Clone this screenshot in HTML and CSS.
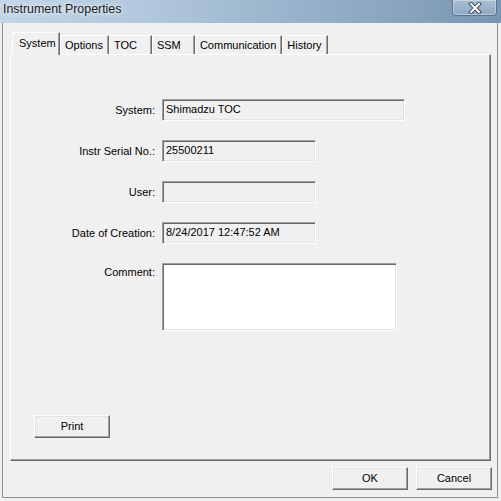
FILE: index.html
```html
<!DOCTYPE html>
<html>
<head>
  <title>Instrument Properties</title>
  <meta name="viewport" content="width=device-width, initial-scale=1.0">
  <link rel="stylesheet" href="styles.css">
</head>
<body>
  <div class="window">
    <div class="titlebar">
      <span class="title">Instrument Properties</span>
      <div class="close">
        <svg width="14" height="12" viewBox="0 0 14 12">
          <path d="M3 2 L11 10 M11 2 L3 10" stroke="#3b4b5c" stroke-width="4" stroke-linecap="square"/>
          <path d="M3 2 L11 10 M11 2 L3 10" stroke="#ffffff" stroke-width="2" stroke-linecap="square"/>
        </svg>
      </div>
    </div>
    <div class="client">
      <div class="tabs">
        <div class="tab selected">System</div>
        <div class="tab">Options</div>
        <div class="tab">TOC</div>
        <div class="tab">SSM</div>
        <div class="tab">Communication</div>
        <div class="tab">History</div>
      </div>
      <div class="panel">
        <div class="form">
          <label class="lbl">System:</label>
          <div class="field wide">Shimadzu TOC</div>

          <label class="lbl">Instr Serial No.:</label>
          <div class="field">25500211</div>

          <label class="lbl">User:</label>
          <div class="field"></div>

          <label class="lbl">Date of Creation:</label>
          <div class="field">8/24/2017 12:47:52 AM</div>

          <label class="lbl top">Comment:</label>
          <div class="field memo"></div>
        </div>
        <div class="panel-foot">
          <button class="btn">Print</button>
        </div>
      </div>
      <div class="actions">
        <button class="btn">OK</button>
        <button class="btn">Cancel</button>
      </div>
    </div>
  </div>
</body>
</html>
```

FILE: styles.css
```css
html, body {
  margin: 0;
  padding: 0;
  background-color: #f0f0f0;
}
body {
  font-family: "Liberation Sans", Arial, sans-serif;
  font-size: 11px;
  color: #000;
}
.window {
  width: 501px;
  height: 501px;
  display: flex;
  flex-direction: column;
  overflow: hidden;
}

/* title bar */
.titlebar {
  height: 23px;
  flex: none;
  display: flex;
  align-items: flex-start;
  justify-content: space-between;
  background: linear-gradient(to right, #c3d5e6 0%, #b1c7dc 30%, #93aec8 65%, #7895b1 100%);
}
.title {
  font-size: 12.4px;
  color: #1b1b1b;
  padding: 2px 0 0 3px;
  text-shadow: 0 0 6px #e8f0f8, 0 0 3px #e8f0f8;
}
.close {
  width: 43px;
  height: 15px;
  margin-right: 4px;
  border: 1px solid #5d7389;
  border-top: none;
  border-radius: 0 0 4px 4px;
  background: linear-gradient(to bottom, #a9bfd4, #8ea8c2);
  box-shadow: inset 0 0 0 1px rgba(255, 255, 255, 0.35);
  display: flex;
  align-items: center;
  justify-content: center;
}

/* client area */
.client {
  flex: 1;
  display: flex;
  flex-direction: column;
  margin: 0 3px 3px 2px;
  border: 1px solid #8d8d8d;
  border-top: none;
  padding: 9px 6px 7px 7px;
}

/* tab strip */
.tabs {
  display: flex;
  align-items: flex-end;
  height: 22px;
  padding-left: 2px;
}
.tab {
  height: 19px;
  line-height: 19px;
  min-width: 43px;
  padding: 0 5px 0 4px;
  border-top: 1px solid #fff;
  border-left: 1px solid #fff;
  border-right: 1px solid #696969;
  box-shadow: inset -1px 0 0 #a0a0a0;
  box-sizing: border-box;
}
.tab.selected {
  position: relative;
  z-index: 1;
  height: 23px;
  line-height: 21px;
  width: 48px;
  padding: 0 0 0 6px;
  margin-bottom: -1px;
  background-color: #f0f0f0;
}

/* tab page */
.panel {
  flex: 1;
  display: flex;
  flex-direction: column;
  border-top: 1px solid #fff;
  border-left: 1px solid #fff;
  border-right: 1px solid #696969;
  border-bottom: 1px solid #696969;
  box-shadow: inset -1px -1px 0 #a0a0a0;
}
.form {
  display: grid;
  grid-template-columns: 144px auto;
  column-gap: 7px;
  row-gap: 19px;
  align-items: center;
  justify-items: start;
  padding-top: 44px;
}
.lbl {
  justify-self: end;
  padding-bottom: 1px;
}
.lbl.top {
  align-self: start;
  padding-top: 3px;
}
.field {
  box-sizing: border-box;
  width: 154px;
  height: 22px;
  line-height: 18px;
  padding: 0 3px;
  border-top: 1px solid #a0a0a0;
  border-left: 1px solid #a0a0a0;
  border-right: 1px solid #fff;
  border-bottom: 1px solid #fff;
  box-shadow: inset 1px 1px 0 #696969, inset -1px -1px 0 #e3e3e3;
  white-space: nowrap;
}
.field.wide {
  width: 243px;
}
.field.memo {
  width: 235px;
  height: 68px;
  background-color: #fff;
}
.panel-foot {
  margin-top: auto;
  padding: 0 0 22px 23px;
}

/* push buttons */
.btn {
  box-sizing: border-box;
  width: 76px;
  height: 23px;
  padding: 0 0 2px;
  font-family: "Liberation Sans", Arial, sans-serif;
  font-size: 11px;
  color: #000;
  background-color: #f0f0f0;
  border-top: 1px solid #fff;
  border-left: 1px solid #fff;
  border-right: 1px solid #696969;
  border-bottom: 1px solid #696969;
  box-shadow: inset -1px -1px 0 #a0a0a0, inset 1px 1px 0 #e3e3e3;
}
.actions {
  display: flex;
  justify-content: flex-end;
  gap: 8px;
  padding-top: 6px;
  margin-right: -1px;
}
```
